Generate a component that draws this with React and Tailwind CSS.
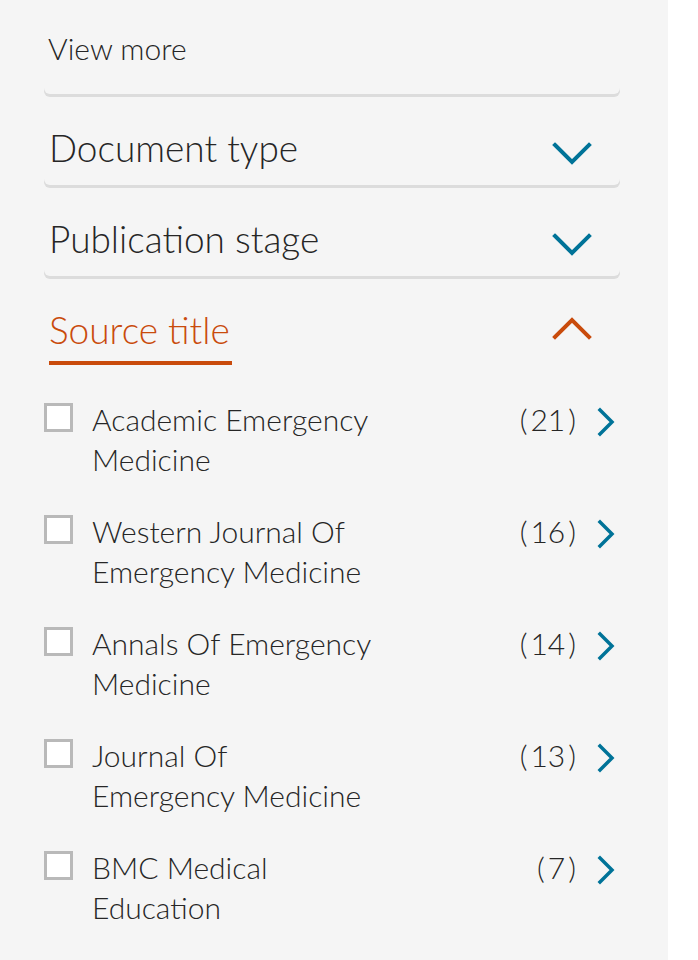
import React from 'react';

const sources = [
  { lines: ['Academic Emergency', 'Medicine'], count: 21 },
  { lines: ['Western Journal Of', 'Emergency Medicine'], count: 16 },
  { lines: ['Annals Of Emergency', 'Medicine'], count: 14 },
  { lines: ['Journal Of', 'Emergency Medicine'], count: 13 },
  { lines: ['BMC Medical', 'Education'], count: 7 },
];

function ChevronDown() {
  return (
    <svg width="40" height="24" viewBox="0 0 40 24" fill="none">
      <polyline points="3,4 20,21 37,4" stroke="#007398" strokeWidth="4" strokeLinecap="square" />
    </svg>
  );
}

function ChevronUp() {
  return (
    <svg width="40" height="24" viewBox="0 0 40 24" fill="none">
      <polyline points="3,20 20,3 37,20" stroke="#c94b0c" strokeWidth="4" strokeLinecap="square" />
    </svg>
  );
}

function ChevronRight() {
  return (
    <svg width="20" height="30" viewBox="0 0 20 30" fill="none">
      <polyline points="4,3 16,15 4,27" stroke="#007398" strokeWidth="3.5" strokeLinecap="square" />
    </svg>
  );
}

export default function App() {
  return (
    <div className="min-h-screen bg-white flex" style={{ fontFamily: 'Lato, "Open Sans", sans-serif' }}>
      <div className="w-[668px] min-h-[960px] bg-[#f5f5f5] pl-[44px] pr-[48px] text-[#262626] font-light">
        {/* View more */}
        <div className="h-[94px] rounded-md shadow-[0_3px_0_#dcdcdc] pl-[4px] pt-[30px]">
          <span className="text-[30px] leading-[36px]">View more</span>
        </div>

        {/* collapsed sections */}
        {['Document type', 'Publication stage'].map((label) => (
          <div
            key={label}
            className="mt-[10px] h-[81px] rounded-md shadow-[0_3px_0_#dcdcdc] pl-[5px] pr-[28px] pt-[7px] flex items-center justify-between"
          >
            <span className="text-[37px] leading-[44px]">{label}</span>
            <span className="pt-[10px]"><ChevronDown /></span>
          </div>
        ))}

        {/* Source title */}
        <div className="mt-[10px] pt-[22px]">
          <div className="flex items-start justify-between pl-[5px] pr-[28px]">
            <span className="text-[37px] leading-[44px] text-[#c94b0c] border-b-4 border-[#c94b0c] pb-[9px] pr-[2px]">
              Source title
            </span>
            <span className="pt-[9px]"><ChevronUp /></span>
          </div>

          <ul className="mt-[34px] flex flex-col gap-[32px]">
            {sources.map((s) => (
              <li key={s.lines[0]} className="flex items-start">
                <span className="mt-[4px] w-[29px] h-[29px] shrink-0 bg-white border-[3px] border-[#b9b9b9]" />
                <span className="ml-[19px] flex-1 text-[30px] leading-[40px]">
                  {s.lines[0]}
                  <br />
                  {s.lines[1]}
                </span>
                <span className="text-[30px] leading-[40px]">
                  (<span className="mx-[3px]">{s.count}</span>)
                </span>
                <span className="ml-[20px] mr-[4px] mt-[8px]"><ChevronRight /></span>
              </li>
            ))}
          </ul>
        </div>
      </div>
    </div>
  );
}
